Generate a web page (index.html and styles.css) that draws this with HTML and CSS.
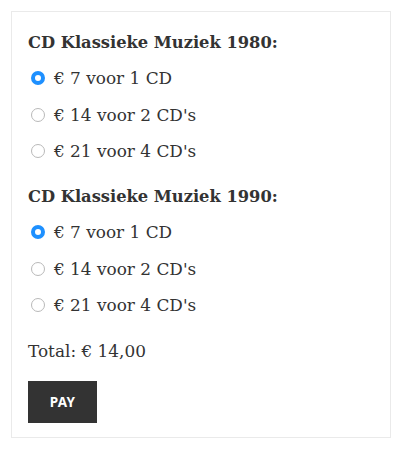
FILE: index.html
```html
<!DOCTYPE html>
<html>
<head>
<meta charset="utf-8">
<link rel="stylesheet" href="styles.css">
</head>
<body>
<form class="box">
  <div class="group">
    <div class="title">CD Klassieke Muziek 1980:</div>
    <label class="opt"><span class="radio on"></span><span>€ 7 voor 1 CD</span></label>
    <label class="opt"><span class="radio"></span><span>€ 14 voor 2 CD's</span></label>
    <label class="opt"><span class="radio"></span><span>€ 21 voor 4 CD's</span></label>
  </div>
  <div class="group group-last">
    <div class="title">CD Klassieke Muziek 1990:</div>
    <label class="opt"><span class="radio on"></span><span>€ 7 voor 1 CD</span></label>
    <label class="opt"><span class="radio"></span><span>€ 14 voor 2 CD's</span></label>
    <label class="opt"><span class="radio"></span><span>€ 21 voor 4 CD's</span></label>
  </div>
  <div class="total">Total: € 14,00</div>
  <button type="button" class="pay">PAY</button>
</form>
</body>
</html>
```
FILE: styles.css
```css
html, body { margin: 0; padding: 0; background: #fff; }
body { padding: 11px; font-family: "DejaVu Serif", serif; color: #333; }
.box {
  width: 380px;
  height: 427px;
  box-sizing: border-box;
  border: 1px solid #eaeaea;
  padding: 19px 16px 0 16px;
  display: flex;
  flex-direction: column;
}
.group { display: flex; flex-direction: column; margin-bottom: 16px; }
.group-last { margin-bottom: 12px; }
.title { font-weight: bold; font-size: 16.3px; line-height: 24px; margin-bottom: 5px; }
.opt { display: flex; align-items: center; gap: 9px; font-size: 16.9px; height: 36.4px; padding-left: 3px; }
.radio {
  width: 14px; height: 14px; box-sizing: border-box; border-radius: 50%;
  border: 1px solid #b9b9b9; background: #fff; flex: none;
}
.radio.on { border: 4px solid #1e90ff; background: #fff; }
.total { font-size: 16.9px; line-height: 24px; margin-top: 4px; }
.pay {
  margin-top: 18px; width: 69px; height: 42px; border: 0; background: #333; color: #fff;
  font-family: "Noto Sans", sans-serif; font-weight: bold; font-size: 13.5px; letter-spacing: 0.02em; padding: 0; align-self: flex-start;
}
```
